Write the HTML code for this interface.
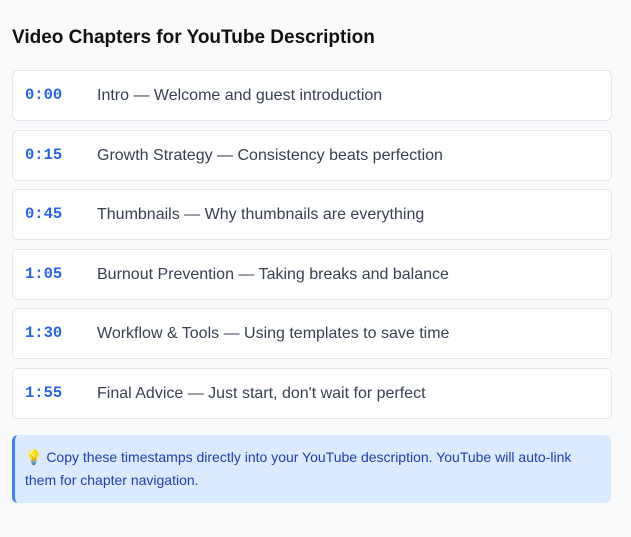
<!DOCTYPE html>
<html><head><meta charset="utf-8"><style>
body{margin:0;background:#f9fafb;font-family:"Liberation Sans",sans-serif;width:631px;height:537px;overflow:hidden}
h1{position:absolute;left:12px;top:26px;margin:0;font-size:19px;font-weight:bold;color:#111;line-height:24px}
.row{position:absolute;left:12px;width:598px;height:49px;background:#fff;border:1px solid #e5e7eb;border-radius:6px}
.t{position:absolute;left:12px;top:14px;font-family:"Liberation Mono",monospace;font-weight:bold;font-size:15.5px;color:#2563eb;line-height:20px}
.d{position:absolute;left:84px;top:15px;font-size:16px;color:#374151;line-height:20px}
.note{position:absolute;left:12px;top:435px;width:586px;height:68px;background:#dbeafe;border-left:3px solid #3b82f6;border-radius:6px;padding-left:10px;font-size:14px;color:#1e40af;line-height:23px}
.note div{padding-top:11px;width:580px}
</style></head><body>
<h1>Video Chapters for YouTube Description</h1>
<div class="row" style="top:70px"><span class="t">0:00</span><span class="d">Intro — Welcome and guest introduction</span></div>
<div class="row" style="top:130px"><span class="t">0:15</span><span class="d">Growth Strategy — Consistency beats perfection</span></div>
<div class="row" style="top:189px"><span class="t">0:45</span><span class="d">Thumbnails — Why thumbnails are everything</span></div>
<div class="row" style="top:249px"><span class="t">1:05</span><span class="d">Burnout Prevention — Taking breaks and balance</span></div>
<div class="row" style="top:308px"><span class="t">1:30</span><span class="d">Workflow &amp; Tools — Using templates to save time</span></div>
<div class="row" style="top:368px"><span class="t">1:55</span><span class="d">Final Advice — Just start, don't wait for perfect</span></div>
<div class="note"><div>💡 Copy these timestamps directly into your YouTube description. YouTube will auto-link them for chapter navigation.</div></div>
</body></html>
